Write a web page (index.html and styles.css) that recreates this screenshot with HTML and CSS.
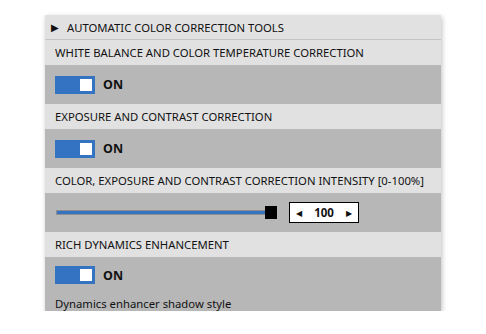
FILE: index.html
```html
<!DOCTYPE html>
<html lang="en">

<head>
    <meta charset="UTF-8">
    <meta name="viewport" content="width=device-width, initial-scale=1.0">
    <title>Color Correction</title>

    <link rel="stylesheet" href="styles.css">
</head>

<body>

    <section class="panel">
        <div class="head"><span class="arrow">&#9654;</span> AUTOMATIC COLOR CORRECTION TOOLS</div>

        <div class="label">WHITE BALANCE AND COLOR TEMPERATURE CORRECTION</div>
        <div class="row">
            <div class="toggle"><span class="knob"></span></div>
            <strong>ON</strong>
        </div>

        <div class="label">EXPOSURE AND CONTRAST CORRECTION</div>
        <div class="row">
            <div class="toggle"><span class="knob"></span></div>
            <strong>ON</strong>
        </div>

        <div class="label">COLOR, EXPOSURE AND CONTRAST CORRECTION INTENSITY [0-100%]</div>
        <div class="row">
            <div class="slider">
                <div class="track"></div>
                <div class="thumb"></div>
            </div>
            <div class="spin">
                <span class="tri">&#9664;</span>
                <b>100</b>
                <span class="tri">&#9654;</span>
            </div>
        </div>

        <div class="label">RICH DYNAMICS ENHANCEMENT</div>
        <div class="row last">
            <div class="line">
                <div class="toggle"><span class="knob"></span></div>
                <strong>ON</strong>
            </div>
            <p class="note">Dynamics enhancer shadow style</p>
        </div>
    </section>

</body>

</html>
```

FILE: styles.css
```css
*,
*::before,
*::after {
    box-sizing: border-box;
}

body {
    margin: 0;
    padding: 15px 0 0 45px;
    font-family: "Noto Sans", "Open Sans", Arial, sans-serif;
    font-size: 11.3px;
    color: #111;
    background: #fff;
}

.panel {
    width: 396px;
    box-shadow: 1px 2px 5px rgba(0, 0, 0, 0.25);
}

.head {
    height: 25px;
    display: flex;
    align-items: center;
    gap: 8px;
    padding-left: 6px;
    background: #e1e1e1;
    border-bottom: 1px solid #c4c4c4;
}

.arrow {
    font-size: 10px;
}

.label {
    height: 25px;
    display: flex;
    align-items: center;
    padding-left: 10px;
    background: #e1e1e1;
}

.row {
    height: 39px;
    display: flex;
    align-items: center;
    gap: 8px;
    padding-left: 10px;
    background: #b7b7b7;
}

.row strong {
    font-size: 12.5px;
}

.toggle {
    width: 40px;
    height: 18px;
    background: #3473c2;
    display: flex;
    justify-content: flex-end;
    align-items: center;
    padding-right: 3px;
}

.knob {
    width: 12px;
    height: 12px;
    background: #fff;
}

.slider {
    position: relative;
    width: 222px;
    height: 14px;
    display: flex;
    align-items: center;
    margin-left: 1px;
}

.track {
    width: 216px;
    height: 5px;
    background: #3473c2;
    border: 1px solid #8e8e8e;
}

.thumb {
    position: absolute;
    left: 209px;
    top: 0;
    width: 12px;
    height: 13px;
    background: #000;
}

.spin {
    width: 70px;
    height: 21px;
    margin-left: 3px;
    background: #fff;
    border: 1px solid #000;
    display: flex;
    align-items: center;
    justify-content: space-between;
    padding: 0 6px;
}

.spin b {
    font-size: 11.5px;
}

.tri {
    font-size: 8px;
}

.row.last {
    height: 54px;
    flex-direction: column;
    align-items: flex-start;
    justify-content: flex-start;
    gap: 0;
    padding-top: 9px;
    overflow: hidden;
}

.line {
    display: flex;
    align-items: center;
    gap: 8px;
}

.note {
    margin: 12px 0 0;
}
```
